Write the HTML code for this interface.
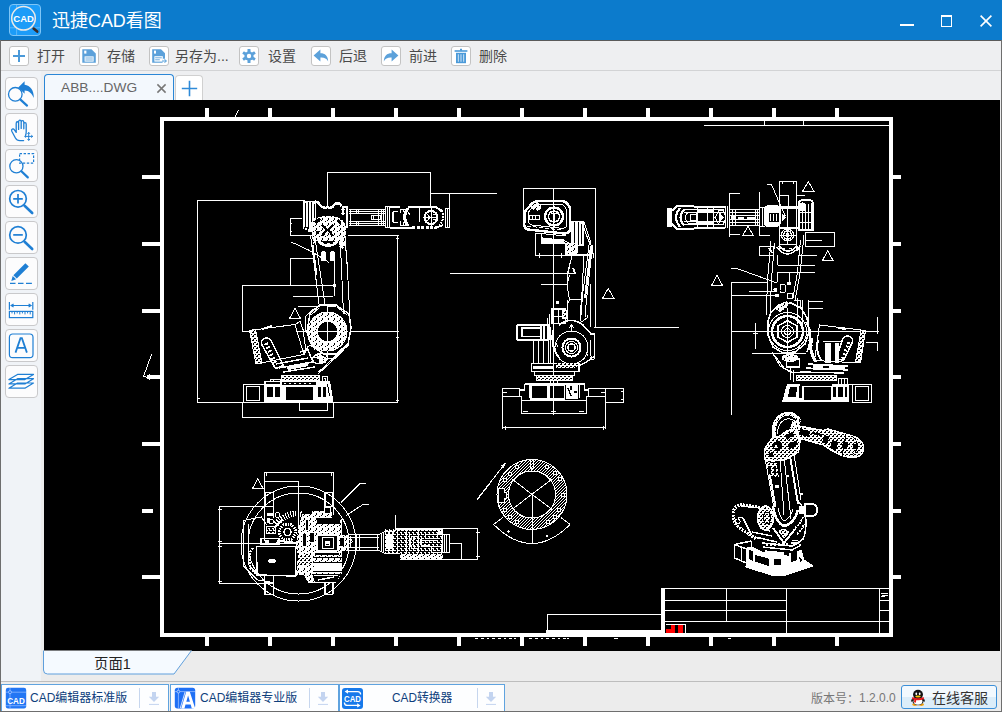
<!DOCTYPE html>
<html lang="zh"><head><meta charset="utf-8"><title>CAD Viewer</title>
<style>
html,body{margin:0;padding:0}
body{width:1002px;height:712px;position:relative;overflow:hidden;background:#ececec;font-family:"Liberation Sans",sans-serif;}
*{box-sizing:border-box}
.abs{position:absolute}
#win{position:absolute;left:0;top:0;width:1002px;height:712px;overflow:hidden;background:#ececec}
#titlebar{position:absolute;left:0;top:0;width:1002px;height:40px;background:#0c7bcc}
#tbline{position:absolute;left:0;top:40px;width:1002px;height:1px;background:#5a5a5a}
#toolbar{position:absolute;left:1px;top:41px;width:1000px;height:29px;background:#eeeff1}
#toolline{position:absolute;left:1px;top:70px;width:1000px;height:1px;background:#d2d3d5}
#tabrow{position:absolute;left:1px;top:71px;width:1000px;height:29px;background:#eeeff1}
#leftbar{position:absolute;left:1px;top:71px;width:40px;height:610px;background:#f0f3f7}
#canvas{position:absolute;left:44px;top:100px;width:956px;height:551px;background:#000;overflow:hidden}
#pagerow{position:absolute;left:44px;top:651px;width:956px;height:30px;background:#ececec}
#statline{position:absolute;left:1px;top:681px;width:1000px;height:1px;background:#bdbdbd}
#status{position:absolute;left:1px;top:682px;width:1000px;height:29px;background:#ececec}
.bl{position:absolute;background:#6e6e6e}
.tbi{position:absolute;top:46px;width:20px;height:20px;background:#fff;border:1px solid #c3c3c3;border-radius:3px}
.tbi svg{position:absolute;left:-1px;top:-1px;width:20px;height:20px}
.lb{position:absolute;left:5px;width:33px;height:33px;background:#fcfcfd;border:1px solid #c9c9cb;border-radius:4px}
.lb svg{position:absolute;left:-1px;top:-1px;width:33px;height:33px}
#tab1{position:absolute;left:44px;top:74px;width:130px;height:27px;background:#f3f8fd;border:1px solid #2a86d6;border-bottom:none;border-radius:4px 4px 0 0}
#tab1 span{position:absolute;left:16px;top:5px;font-size:13.7px;color:#666}
#tabplus{position:absolute;left:175px;top:75px;width:28px;height:26px;background:#fff;border:1px solid #d0d0d0;border-bottom:none;border-radius:4px 4px 0 0}
.sb{position:absolute;top:684px;height:28px;border:1px solid #5fa3df;background:#fdfeff}
.sbsep{position:absolute;top:688px;width:1px;height:20px;background:#c6d6ee}
#kefu{position:absolute;left:901px;top:685px;width:96px;height:24px;border:1px solid #3c8fd8;border-radius:3px;background:linear-gradient(#f3f9fe 0,#f3f9fe 50%,#dcedf9 50%,#dcedf9 100%)}
#ver{position:absolute;left:859px;top:691px;font-size:12px;color:#777;white-space:nowrap}
.tx{font-family:"Liberation Sans","Noto Sans CJK SC",sans-serif;font-size:1000px}
</style></head>
<body>
<div id="win">
<div id="titlebar">
  <svg class="abs" style="left:8px;top:3px;width:34px;height:34px" viewBox="0 0 34 34">
    <rect x="1.5" y="1.5" width="31" height="31" rx="3.5" fill="#1c9cf8" stroke="#7fc6f7" stroke-width="1"/>
    <path d="M8.6 2v30M2 24.8h30" stroke="#5db8f9" stroke-width="1" fill="none"/>
    <circle cx="15.5" cy="15.3" r="11.8" fill="#1c9cf8" stroke="#ebe9e6" stroke-width="1.5"/>
    <path d="M25.6 25.6l3.600 3" stroke="#3a2a26" stroke-width="2.600" stroke-linecap="round"/>
    <text x="15.6" y="18.9" font-family="Liberation Sans, sans-serif" font-weight="bold" font-size="9.4" fill="#fff" text-anchor="middle" textLength="20.5" lengthAdjust="spacingAndGlyphs">CAD</text>
  </svg>
  <svg style="width:109.78px;height:18.50px;position:absolute;left:51.5px;top:11.2px;" viewBox="0 -880 5934 1000"><text class="tx" x="0" y="0" fill="#fff" textLength="5934" lengthAdjust="spacingAndGlyphs">迅捷CAD看图</text></svg>
  <div class="abs" style="left:900px;top:24px;width:14px;height:2px;background:#fff"></div>
  <div class="abs" style="left:941px;top:15px;width:11px;height:12px;border:1px solid #fff;border-top-width:2px"></div>
  <svg class="abs" style="left:979px;top:14px;width:14px;height:14px" viewBox="0 0 14 14"><path d="M1.6 1.6l10.8 10.8M12.4 1.6L1.6 12.4" stroke="#fff" stroke-width="1.6" fill="none"/></svg>
</div>
<div id="tbline"></div>
<div id="toolbar"></div>
<div id="toolline"></div>
<div id="tabrow"></div>
<div id="leftbar"></div>

<!-- toolbar buttons -->
<div class="tbi" style="left:9px"><svg viewBox="0 0 20 20"><path d="M4 10h12M10 4v12" stroke="#4b9ad9" stroke-width="2" fill="none"/></svg></div>
<svg style="width:28.00px;height:14.00px;position:absolute;left:37.0px;top:49.0px;" viewBox="0 -880 2000 1000"><text class="tx" x="0" y="0" fill="#4a4a4a">打开</text></svg>
<div class="tbi" style="left:79px"><svg viewBox="0 0 20 20"><path d="M3.3 3.2h9.2l4.3 4.3v9.3H3.3z" fill="#5ca1da"/><rect x="5.2" y="4.6" width="2.2" height="3" fill="#fff"/><rect x="5.6" y="10.4" width="9" height="5.2" fill="#fff"/><path d="M6.4 12h7.4M6.4 14h7.4" stroke="#5ca1da" stroke-width="0.9"/></svg></div>
<svg style="width:28.00px;height:14.00px;position:absolute;left:107.0px;top:49.0px;" viewBox="0 -880 2000 1000"><text class="tx" x="0" y="0" fill="#4a4a4a">存储</text></svg>
<div class="tbi" style="left:149px"><svg viewBox="0 0 20 20"><path d="M3.2 3.2h8.8l4 4v5.6h-2.4v4H3.2z" fill="#5ca1da"/><rect x="5" y="4.6" width="2" height="3" fill="#fff"/><rect x="5.4" y="10.2" width="8.4" height="5.4" fill="#fff"/><path d="M6.2 11.8h6.6M6.2 13.8h4.6" stroke="#5ca1da" stroke-width="0.9"/><path d="M13.2 15h4M15.6 13.2l1.8 1.8-1.8 1.8" stroke="#4b9ad9" stroke-width="1" fill="none"/></svg></div>
<svg style="width:53.68px;height:14.00px;position:absolute;left:175.0px;top:49.0px;" viewBox="0 -880 3834 1000"><text class="tx" x="0" y="0" fill="#4a4a4a" textLength="3834" lengthAdjust="spacingAndGlyphs">另存为...</text></svg>
<div class="tbi" style="left:239px"><svg viewBox="0 0 20 20"><g transform="translate(10 10)" fill="#5ca1da"><circle r="4.6"/><g id="gt"><rect x="-1.5" y="-7" width="3" height="14" rx="0.6"/></g><use href="#gt" transform="rotate(60)"/><use href="#gt" transform="rotate(120)"/><circle r="2.2" fill="#fff"/></g></svg></div>
<svg style="width:28.00px;height:14.00px;position:absolute;left:268.0px;top:49.0px;" viewBox="0 -880 2000 1000"><text class="tx" x="0" y="0" fill="#4a4a4a">设置</text></svg>
<div class="tbi" style="left:311px"><svg viewBox="0 0 20 20"><path d="M2.6 9.6L9.4 3.6v3.6c4.6 0 7.6 2.6 7.8 8.2c-1.6-3-4-4-7.8-3.8v3.8z" fill="#5ca1da"/></svg></div>
<svg style="width:28.00px;height:14.00px;position:absolute;left:339.0px;top:49.0px;" viewBox="0 -880 2000 1000"><text class="tx" x="0" y="0" fill="#4a4a4a">后退</text></svg>
<div class="tbi" style="left:381px"><svg viewBox="0 0 20 20"><path d="M17.4 9.6L10.6 3.6v3.6c-4.6 0-7.6 2.6-7.8 8.2c1.6-3 4-4 7.8-3.8v3.8z" fill="#5ca1da"/></svg></div>
<svg style="width:28.00px;height:14.00px;position:absolute;left:409.0px;top:49.0px;" viewBox="0 -880 2000 1000"><text class="tx" x="0" y="0" fill="#4a4a4a">前进</text></svg>
<div class="tbi" style="left:451px"><svg viewBox="0 0 20 20"><path d="M3.6 5h12.8" stroke="#4b9ad9" stroke-width="1.6"/><path d="M10 2.8v2" stroke="#4b9ad9" stroke-width="2"/><rect x="5" y="6.8" width="10" height="10.4" fill="#4b9ad9"/><path d="M7.4 8.2v7.6M10 8.2v7.6M12.6 8.2v7.6" stroke="#b9d8f0" stroke-width="1.2"/></svg></div>
<svg style="width:28.00px;height:14.00px;position:absolute;left:479.0px;top:49.0px;" viewBox="0 -880 2000 1000"><text class="tx" x="0" y="0" fill="#4a4a4a">删除</text></svg>

<!-- tabs -->
<div id="tab1"><span>ABB....DWG</span>
  <svg class="abs" style="left:111px;top:8px;width:11px;height:11px" viewBox="0 0 11 11"><path d="M1.4 1.4l8.2 8.2M9.6 1.4L1.4 9.6" stroke="#777" stroke-width="1.5" fill="none"/></svg>
</div>
<div id="tabplus"><svg class="abs" style="left:5px;top:4px;width:17px;height:17px" viewBox="0 0 17 17"><path d="M0.8 8.5h15.4M8.5 0.8v15.4" stroke="#2f8ad8" stroke-width="1.6" fill="none"/></svg></div>

<!-- left toolbar -->
<div class="lb" style="top:77px"><svg viewBox="0 0 33 33"><circle cx="10.3" cy="17.3" r="6.8" fill="none" stroke="#1f7fd4" stroke-width="1.3"/><path d="M15.2 22.4l6.8 6.2" stroke="#1f7fd4" stroke-width="2.2" stroke-linecap="round"/><path d="M13.2 10.4l6.4-6.2v3.6c5.6.6 9.400 5.6 9.200 13.200c-1.800-4.600-4.600-7.400-9.200-7.600v3.400z" fill="#1f7fd4"/></svg></div>
<div class="lb" style="top:113px"><svg viewBox="0 0 33 33"><path d="M11.2 17.200V10.400c0-2.200 2.400-2.200 2.400 0v6M13.600 15.400V8.800c0-2.200 2.600-2.200 2.600 0v6.600M16.200 15.400V9.200c0-2.200 2.600-2.200 2.600 0v6.600M18.800 15.800v-4.600c0-2 2.400-2 2.400 0v7.800c0 1.200-.2 2.200-.6 3.200M11.200 17.200v2.200l-1.800-2.600c-1.200-1.800-3.600-.6-2.600 1.400l3.600 6.800c1 1.800 2.400 2.600 4.400 2.600h3.800" fill="none" stroke="#1f7fd4" stroke-width="1.300" stroke-linecap="round" stroke-linejoin="round"/><path d="M23.700 19.400v8M19.700 23.400h8M22.500 20.800l1.200-1.400 1.200 1.400M22.500 26l1.200 1.400 1.200-1.400M21.100 22.200l-1.400 1.200 1.400 1.200M26.300 22.200l1.400 1.200-1.400 1.200" fill="none" stroke="#1f7fd4" stroke-width="1"/></svg></div>
<div class="lb" style="top:149px"><svg viewBox="0 0 33 33"><circle cx="11.400" cy="17.300" r="6.600" fill="none" stroke="#1f7fd4" stroke-width="1.300"/><path d="M16.400 22.200l6.400 6.200" stroke="#1f7fd4" stroke-width="2.200" stroke-linecap="round"/><rect x="14.600" y="4.600" width="14" height="9.600" fill="none" stroke="#1f7fd4" stroke-width="1.200" stroke-dasharray="2.400 1.600"/></svg></div>
<div class="lb" style="top:185px"><svg viewBox="0 0 33 33"><circle cx="13" cy="13.800" r="8.300" fill="none" stroke="#1f7fd4" stroke-width="1.700"/><path d="M8.200 13.800h9.600M13 9v9.600" stroke="#1f7fd4" stroke-width="1.700"/><path d="M19.600 20.800l7.600 7.200" stroke="#1f7fd4" stroke-width="2.600" stroke-linecap="round"/></svg></div>
<div class="lb" style="top:221px"><svg viewBox="0 0 33 33"><circle cx="13" cy="13.900" r="8.300" fill="none" stroke="#1f7fd4" stroke-width="1.700"/><path d="M8.200 13.900h9.600" stroke="#1f7fd4" stroke-width="1.700"/><path d="M19.600 20.800l7.600 7.200" stroke="#1f7fd4" stroke-width="2.600" stroke-linecap="round"/></svg></div>
<div class="lb" style="top:257px"><svg viewBox="0 0 33 33"><path d="M20.400 6.200l3.400 3.400-12 12-3.400-3.400z" fill="#1f7fd4"/><path d="M7.700 18.900l3.400 3.400-4.800 1.600z" fill="#1f7fd4"/><path d="M5 26.300h5.500M13 26.300h5.500M21 26.300h5.900" stroke="#1f7fd4" stroke-width="1.200"/></svg></div>
<div class="lb" style="top:293px"><svg viewBox="0 0 33 33"><path d="M4.400 9v7.800M27.800 9v7.800M6.400 12.500h19.400M8.600 11l-2.400 1.500 2.400 1.500M23.600 11l2.400 1.500-2.400 1.500" fill="none" stroke="#1f7fd4" stroke-width="1.200"/><rect x="4.400" y="18.400" width="23.400" height="6.200" fill="none" stroke="#1f7fd4" stroke-width="1.200"/><path d="M7 18.400v2M9.600 18.400v3M12.200 18.400v2M14.800 18.400v3M17.400 18.400v2M20 18.400v3M22.600 18.400v2M25.200 18.400v3" stroke="#1f7fd4" stroke-width="1"/></svg></div>
<div class="lb" style="top:329px"><svg viewBox="0 0 33 33"><rect x="4.400" y="5" width="23.600" height="23.600" rx="3.200" fill="none" stroke="#1f7fd4" stroke-width="1.200"/><path d="M10.500 23.600l5-14.400h1.400l5 14.400M12.300 18.800h7.800" fill="none" stroke="#1f7fd4" stroke-width="1.800"/></svg></div>
<div class="lb" style="top:365px"><svg viewBox="0 0 33 33"><path d="M12.500 9.400h16l-8.600 5.200h-16zM12.500 13.700h16l-8.600 5.200h-16zM12.500 18h16l-8.600 5.200h-16z" fill="#fff" fill-opacity="0.600" stroke="#1f7fd4" stroke-width="1.200" stroke-linejoin="round"/></svg></div>

<!-- canvas -->
<div id="canvas">
<svg class="abs" style="left:0;top:0;width:956px;height:551px" viewBox="44 100 956 551" shape-rendering="crispEdges" fill="none" stroke="#fff" stroke-width="1">
<defs>
  <!-- dense linework approximations -->
  <pattern id="pd" width="6" height="5" patternUnits="userSpaceOnUse" stroke="none"><rect width="6" height="5" fill="#fff"/><rect x="1" y="1" width="1" height="1" fill="#000"/><rect x="4" y="3" width="1" height="2" fill="#000"/><rect x="3" y="0" width="1" height="1" fill="#000"/></pattern>
  <pattern id="pm" width="4" height="4" patternUnits="userSpaceOnUse" stroke="none"><rect width="4" height="4" fill="#fff"/><rect x="0" y="0" width="2" height="1" fill="#000"/><rect x="2" y="2" width="2" height="1" fill="#000"/><rect x="1" y="3" width="1" height="1" fill="#000"/></pattern>
  <pattern id="pl" width="4" height="4" patternUnits="userSpaceOnUse" stroke="none"><rect width="4" height="4" fill="#000"/><rect x="0" y="0" width="2" height="1" fill="#fff"/><rect x="2" y="2" width="2" height="1" fill="#fff"/><rect x="1" y="1" width="1" height="2" fill="#fff"/></pattern>
  <pattern id="hatch" width="3" height="3" patternUnits="userSpaceOnUse" stroke="none"><rect width="3" height="3" fill="#000"/><path d="M-1 1L1 -1M0 3L3 0M2 4L4 2" stroke="#fff" stroke-width="1"/></pattern>
</defs>
<!-- sheet frame -->
<g id="frame" stroke="none" fill="#fff">
  <path d="M160 117h733v520h-733zM164 121v512h725v-512z" fill-rule="evenodd"/>
  <!-- top ticks -->
  <path d="M205 108h4v9h-4zM268 108h4v9h-4zM331 108h4v9h-4zM394 108h4v9h-4zM457 108h4v9h-4zM520 108h4v9h-4zM583 108h4v9h-4zM646 108h4v9h-4zM709 108h4v9h-4zM772 108h4v9h-4zM835 108h4v9h-4z"/>
  <!-- bottom ticks -->
  <path d="M205 637h4v9h-4zM268 637h4v9h-4zM331 637h4v9h-4zM394 637h4v9h-4zM457 637h4v9h-4zM520 637h4v9h-4zM583 637h4v9h-4zM646 637h4v9h-4zM709 637h4v9h-4zM772 637h4v9h-4zM835 637h4v9h-4z"/>
  <!-- left ticks -->
  <path d="M142 175h18v4h-18zM142 242h18v4h-18zM142 309h18v4h-18zM148 375h12v4h-12zM142 442h18v4h-18zM142 509h11v4h-11zM142 575h18v4h-18z"/>
  <circle cx="149.5" cy="377" r="2.6"/>
  <!-- right ticks -->
  <path d="M893 175h8v4h-8zM893 242h8v4h-8zM893 309h8v4h-8zM893 375h8v4h-8zM893 442h8v4h-8zM893 509h8v4h-8zM893 575h8v4h-8z"/>
  <!-- title block heavy lines -->
  <path d="M661 588h4v46h-4zM546 630h116v3h-116z"/>
</g>
<g id="frame-thin">
  <path d="M238.5 110l-3.5 7M151.5 354.5l-8 22l5 1"/>
  <path d="M704 125.500h185M764.500 121v4.500M803.500 121v4.500"/>
  <!-- title block -->
  <path d="M664 588.500h225M664 600.500h122M664 610.500h122M664 621.500h225M726.500 589v32M786.500 589v44M879.500 589v44M879.500 610.500h10M879.500 600.500h10"/>
  <path d="M547.500 630v-15.500h114"/>
  <path d="M666 624.500h19.500v8" />
  <path d="M881 593h7M882 595h6M881 597l7-2" />
  <!-- dotted note text under frame -->
  <path d="M475 638.500h3M481 638.500h3M487 638.500h2M492 638.500h3M498 638.500h3M504 638.500h2M509 638.500h3M514 638.500h2M529 638.500h3M535 638.500h3M541 638.500h2M546 638.500h3M552 638.500h3M558 638.500h2M563 638.500h3M567 638.500h2M614 638.500h4M728 638.500h3" />
</g>
<g stroke="none">
  <path d="M665.500 628.500h5v-4h4.500v8h-9.500zM678 624.500h4.500v8h-4.500z" fill="#f00"/>
</g>
<!-- ===== VIEW 1 : side elevation (left) ===== -->
<g id="v1">
  <!-- dimension lines -->
  <path d="M327.500 207v-34.500h103v33M430.500 193.500h66.500M449.500 193.500v33"/>
  <path d="M305 200.500h-107.500v202h200v-167.500h-50M312 235.500h-14"/>
  <path d="M302 218.500h-11.500v16.500h12M290 223.500h2M290 231.500h2M396 238.500h3"/>
  <path d="M313 258.500h-22.500v27M335 285.500h-92.500v46h8M350 331.500h47.500"/>
  <path d="M292.500 296.500h40M298 306.500h20M328 306.500h8M334.500 255v41M327.500 306v52"/>
  <path d="M289.500 318.500h11l-5.500-10z"/>
  <path d="M291 242.500l5 1.500q18 8 33 18.500"/>
  <path d="M242.500 402.500v15h91v-15M299.500 402.500v8h28v-8"/>
  <circle cx="334.500" cy="285.500" r="1.500" fill="#fff"/><path d="M396 235.500h3M396 331.500h3M396 337.500h3M396 400.500h3M198 398.500h2" />
  <!-- upper arm : motor end -->
  <path d="M303 203q0-2.500 3-2.500h8l2 2v29h-8q-5 0-5-4z" fill="#fff" stroke="none"/>
  <path d="M305.500 203v24M308.500 202v27M311.500 202v20M314.500 204v14M304 227h3v3h-3z" stroke="#000"/>
  <!-- upper arm : casting top band -->
  <path d="M315 201.500l3 1l4 4.500q5 2 5.500-1q.5 3 5 1l3-3.500h4l2 2.500" stroke-width="2.400"/>
  <path d="M341.500 206.500h5M342.500 207v8M346.500 206v22" stroke-width="2"/>
  <path d="M341 209.500h4M341 213.500h4"/>
  <!-- elbow blob -->
  <path d="M312 236v-12q2-8 16-8t17 8l1 4v8l-2 3q2 6-1 10l-4-2v-6h-24l-1 5z" fill="url(#pd)" stroke="none"/>
  <path d="M323 224l4.500 5.500L332 224l2 1-4.500 5 4.500 5.500-2 1-4.500-5.500-4.500 5.500-2-1 4.500-5.500-4.500-5z" fill="#000" stroke="none"/>
  <path d="M314 221l5-3 2 2-5 4zM316 231h3v3h-3zM338 219l3 3-2 2-3-3z" fill="#000" stroke="none"/>
  <path d="M318 239q10 9 20 0v4q-10 8-20 0z" fill="#fff" stroke="none"/>
  <path d="M324 243.500h3M330 243.500h3" stroke="#000"/>
  <!-- arm tube -->
  <path d="M349 209.500h36M349 211.500h36M349 213.500h36M349 221.500h36M349 223.500h36M349 225.500h36" />
  <path d="M350.500 209v17M356.500 209v5M356.500 221v5M358.500 209v5M358.500 221v5M381.500 209v17M383.500 209v17M378.500 209v17"/>
  <path d="M351 214h5v7h-5zM361 215h10v5h-10z" fill="#000" stroke="none"/>
  <path d="M371 215.500h9v4h-9z"/><path d="M373 215v5" />
  <!-- flange -->
  <path d="M385 206.500h5M385 227.500h5M385.500 206v22M387.500 206v22M389.500 206v22"/>
  <!-- wrist housing -->
  <path d="M390 207h10M408 207h27l8 4M390 228h22M434 228.500l9-3.500" stroke-width="2"/>
  <path d="M412 227h25" stroke-width="3" stroke-dasharray="3 1.500"/>
  <path d="M398 211.500h-3q-2 0-2 2v7q0 2 2 2h3" stroke-width="1.500"/>
  <path d="M400 209.500h6M400 225.500h6M400.500 209v4M400.500 221v5M403.500 209v3M403.500 222v4"/>
  <path d="M408 208q-7 9 0 18" stroke-width="3"/>
  <path d="M406 209l4 6M404 213l3 1M404 221l3-1" />
  <path d="M419.500 208v14"/>
  <circle cx="431" cy="217.500" r="7"/><circle cx="431" cy="217.500" r="6"/>
  <path d="M424 217.500h14M431 206v22M427 214l3 3.500-3 3.500M433 214.500h3v5h-3"/>
  <path d="M436 207q8 4 7 10.500t-7 10.500" stroke-width="2" stroke-dasharray="2 1"/>
  <path d="M444.500 208h5M444.500 227h5M445.500 208v19M447.500 208v19"/>
  <!-- lower arm -->
  <path d="M310.500 235l9 72.500M314.500 235l10.500 69M340 235l3.500 79M345 237l2.500 33.500l2.500 49"/>
  <path d="M312.500 245l4 30" stroke-width="2"/>
  <path d="M321.500 260v-6q0-3 2-3t2 3v6zM330.500 260v-6q0-3 2-3t2 3v6z" fill="#fff"/>
  <path d="M346 250l1 10M347.500 262v4"/>
  <!-- shoulder ring -->
  <path d="M310 313l10-8h16l13 9l2 14-3 16-12 10h-12l-12-8-5-14z" stroke-width="1.500"/>
  <path d="M311 315l8-7M337 307l10 8M349 345l-11 9M308 338l7 12" />
  <circle cx="327.500" cy="331.500" r="15" stroke="url(#pd)" stroke-width="8"/>
  <circle cx="327.500" cy="331.500" r="10.500" stroke-width="1.500"/>
  <circle cx="327.500" cy="331.500" r="19.500"/>
  <path d="M313 309l-8 8v14M306 331.500h-10M317 331.500h22M327.500 320v24"/>
  <!-- housing / balancer -->
  <path d="M249.500 330.500l45.500-6l9 30-48 9.500z"/>
  <path d="M249.500 330.500l6.500 33.500 6-1-6.500-33.500z" fill="url(#pm)" stroke-width="1"/>
  <path d="M262 328l10-3v2l-10 3z" fill="#fff" stroke="none"/>
  <path d="M295 324.500l5-3 3 8 3 22M304 354.500l4-8 4-2"/>
  <path d="M262 345q-2-5 2.500-6.500t7 3l12 24l-8 3z" stroke-width="1.500"/>
  <path d="M266 343l10 22" stroke-width="4" stroke-dasharray="2 2"/>
  <path d="M276 364l32-6M279 368l34-6M283 372l32-5M300 352l8-2 4 10" stroke-width="1.500"/>
  <path d="M286 366l22-4v4l-20 4z" fill="#fff" stroke="none"/>
  <ellipse cx="320" cy="358.500" rx="7.500" ry="5" transform="rotate(-12 320 358.500)" stroke-width="1.500"/>
  <path d="M314 357l12 3M320 354v9M317 355l6 7M321 356l4 2v4l-4-1z" stroke-width="1.500"/>
  <path d="M348.500 344l-30 28M344 350l-26 24"/>
  <path d="M326 358.500h6"/>
  <!-- turntable -->
  <path d="M281 375.500h38v5h-38z" fill="url(#pm)"/>
  <path d="M270 379.500h10v5h-10zM273 379.500v5M322 376.500h5v7h-5zM324 378.500h1v3h-1"/>
  <!-- base -->
  <path d="M243 384.500h21v17.500h-21zM246.500 386.500h13v13.500h-13z"/>
  <path d="M264 381h66l3.500 21h-69.500z" fill="#fff" stroke="none"/>
  <path d="M266 382h14v2h-14zM267 387h6v10h-6zM275 387h5v10h-5zM282 382h34v3h-34zM286 386.500h26.500v13h-26.500zM317.500 387h3.500v10h-3.500zM323 387h3v10h-3zM328 384l2 12h-1l-2-12z" fill="#000" stroke="none"/>
  <path d="M284 383.500h30" stroke-dasharray="2 3"/>
</g>
<!-- ===== VIEW 2 : front elevation (middle) ===== -->
<g id="v2">
  <!-- dimension lines -->
  <path d="M523.500 227v-38.500h71.500v139.500M553.500 188.500v226M449.500 273.500h126M541 284.500h26M594 327.500h85"/>
  <path d="M535.500 233v22.500h53M539.500 253v5M561.500 253v5M537 255.500h6M559 255.500h6"/>
  <path d="M602.500 298.500h11.500l-5.800-10z"/>
  <path d="M590.500 284v43M596 327.500h4" /><circle cx="557.500" cy="302.500" r="1" fill="#fff"/>
  <path d="M502.500 388v40.500M605.500 388v40.500M502.500 427.500h103M505 425.500v4M603 425.500v4M605.500 388.500h17.500v13.500h-17.500M621 391.500h3M621 399.500h3"/>
  <!-- wrist housing (front) -->
  <path d="M524.500 222v-10l7-8q3-3 9-3h21q4 0 6 3l2.500 3.500v23q-2 3-6 3l-36-4q-4-1-4-7z" stroke-width="2.500"/>
  <path d="M528 221v-8.500l6-6.500q2-2 7-2h19q3 0 4.500 2.500l2 3v17l-3 2-32-3.500q-3-1-3-4z"/>
  <path d="M530 207l7-4 4 1-8 6zM536 208l5-3v4l-4 2z" fill="#fff" stroke="none"/>
  <circle cx="554" cy="216.500" r="9" stroke-width="2.500"/>
  <circle cx="554" cy="216.500" r="5.500" stroke-width="1.500"/>
  <path d="M550.500 213.500h7M554 213.500v7"/>
  <path d="M529.500 215.500h9.500v4h-9.500zM532.500 215.500v4M535.500 215.500v4"/>
  <path d="M527 226l34 4" stroke-dasharray="4 2"/>
  <!-- under housing -->
  <path d="M541 234.500l2 6M535.500 233l30 3"/>
  <path d="M542 239l20 .5 3 4-23-.5z" fill="#fff" stroke-width="1.500"/>
  <path d="M562 239l8 5"/>
  <!-- arm upper block -->
  <path d="M571 221h13v25h-13z" fill="#fff" stroke="none"/>
  <path d="M574.500 222v23M578.500 222v23M581.500 224v20" stroke="#000"/>
  <path d="M584 222l6 18 4 18M584 228l5 14"/>
  <path d="M565 243.500h12v9.500l-5 1h-7z" fill="url(#pd)" stroke-width="1"/>
  <path d="M572 254h17"/>
  <!-- lower arm -->
  <path d="M572.500 254l-5.500 21v10l2.500 14.500M569.500 275l-2.500 10M570.500 262l-2.500 12" />
  <path d="M569.500 299.500h11M569.500 299.500l-2.500 6v16M567.500 300v22" />
  <path d="M584 254l-3.500 67M589.500 241.500l-7 54-2 26M592.500 245l-6 55-1.500 17" />
  <path d="M591 246l-6 52" stroke-width="2"/>
  <path d="M580 305v14q0 3 3 2l4-3v-3"/>
  <path d="M573 268l2 5" stroke-width="2"/>
  <!-- blocks left of arm bottom -->
  <path d="M552 309h13.500v14.500h-13.500zM552 316.500h13.500M558.500 309v14.500" stroke-width="1.500"/>
  <path d="M562 310h4v8h-4z" fill="url(#pm)"/>
  <path d="M549.500 314v26M547.500 318v6"/>
  <!-- motor -->
  <path d="M519 324.500h29v15.500h-29q-2 0-2-2v-11.500q0-2 2-2z" stroke-width="2"/>
  <path d="M522 328h18.500v8.500h-18.500z" stroke-width="1.500"/>
  <path d="M541 325v15M544 325v15" stroke-width="1.500"/>
  <!-- column -->
  <path d="M533.500 340.500v23M538.500 340.500v23M543.500 340.500v23M548.500 340.500v23M550.500 327v36" />
  <!-- gear housing -->
  <circle cx="571.500" cy="347.500" r="16.500"/>
  <circle cx="571.500" cy="347.500" r="9" stroke-width="2"/>
  <circle cx="571.500" cy="347.500" r="6"/>
  <circle cx="571.500" cy="347.500" r="3.500" stroke-width="1.500"/>
  <path d="M559 325q12-9 24 0l8 9h3.500v22l-8 6q-8 5-16 4" stroke-width="1.500"/>
  <path d="M571.500 325v6M569 328l2.500-3 2.500 3M556 343l2 4M586 352l2 4M582 360l3-2M590 340v16M592.500 356a2 2 0 1 0 .1 0" />
  <path d="M553 330q-3 16 6 28" stroke-width="2"/>
  <!-- lower body -->
  <path d="M531.500 363.500h47.500v8h-47.500z" stroke-width="1.500"/>
  <path d="M533 366h20v3h-20z" fill="#fff" stroke="none"/>
  <path d="M556 362.500h22l-3 5h-19z" fill="url(#pm)" stroke="none"/>
  <path d="M534 372v3.500h40v-3.500" />
  <path d="M536 375.500h36v4.500h-36z" fill="url(#pm)"/>
  <path d="M550 380v4M557 380v4"/>
  <!-- base -->
  <path d="M524.500 384h60M524.500 384v6h-5v6M584.500 384v6h4v6M529.500 384v14M579.500 384v14" stroke-width="1.500"/>
  <path d="M531 385h17v14h-17zM549.500 385h15v14h-15z" stroke-width="1.500"/>
  <path d="M565.500 385h12.500v14h-12.500z" fill="#fff" stroke="none"/>
  <path d="M568 388l3 8M574 392h3M571 386v4" stroke="#000" stroke-width="1.500"/>
  <!-- mounting plate -->
  <path d="M502.500 388.500h17M588 388.500h17.500M502.500 396.500h19M586 396.500h19.500M502.500 392.500h4M601 392.500h4" />
  <path d="M521.500 396.500v17h64.500v-17M521.500 400.500h64.500" />
  <path d="M523 411.500h5M579 411.500h5M551 411.500h5"/>
</g>
<!-- ===== VIEW 3 : side elevation mirrored with working dims (right) ===== -->
<g id="v3">
  <!-- triangles -->
  <path d="M802.500 191.500h11.500l-5.700-10zM742.500 235.500h11l-5.500-9zM822.500 260.500h10.500l-5.300-10zM711.500 285.500h11l-5.500-10z"/>
  <!-- dimension lines -->
  <path d="M729.500 192.500v44M729.500 193.500h10M729.500 234.500h10M759.500 192v43.500h10"/>
  <path d="M767 184.500h4.500l9 21l5 11"/>
  <path d="M779.500 207v-25.500h17v26M779.500 195.500h9v12M796.500 195.500h8M782 181.500v2M793 181.500v2"/>
  <path d="M805.500 232.500h28.500v13.500h-28.500zM805.500 240.500h16"/>
  <path d="M759.500 246.500h14v9h-14z"/>
  <path d="M798 255.500h19M777.500 255v10M798.500 255v10M777.500 265.500h37.500M777.500 272.500h37.500"/>
  <path d="M731 268.500h6l40 14.500"/>
  <path d="M768 282.500h-36.500v132M748.500 291.500h28M731.500 295.500h45M731.500 331.500h147.500"/>
  <path d="M755.500 323v26M753 333.500h5M751.500 353.500h54"/>
  <path d="M808.500 299.500v24.500M808.500 301.500h14.500M808.500 308.500h14.500"/>
  <path d="M877.500 317v16.500M877.500 342v9M865.500 342.500h12"/>
  <circle cx="775.500" cy="289.500" r="1.500" fill="#fff"/><circle cx="789" cy="283.500" r="1.500" fill="#fff"/><circle cx="777" cy="295.500" r="1.500" fill="#fff"/>
  <!-- upper arm (pointing left) -->
  <path d="M667 208h5v19h-5z" fill="#fff" stroke="none"/>
  <path d="M672 211l5-5h16l2 1h30M672 224l5 5h16l2-1h30" stroke-width="1.500"/>
  <path d="M680 208q-8 9.500 0 19M684 209.500q-7 8 0 16" stroke-width="2"/>
  <path d="M688 212q-5 5.500 0 11h8v-11zM690 214.500h6v6h-6z"/>
  <path d="M684 209.500h40M684 212.500h40M684 221.500h40M684 224.500h40M697.500 207v21M707.500 207v21M713.500 207v21" />
  <path d="M698 209h9v3h-9zM698 222h9v3h-9zM708 209h5v3h-5zM708 222h5v3h-5z" fill="#fff" stroke="none"/>
  <path d="M715 217.500l4-7h4l2 4v6l-2 4h-4z" />
  <path d="M719 212l4 5.500-4 5.500z" fill="#fff"/>
  <path d="M725.500 206v22M727.500 206v22" stroke-width="1.500"/>
  <path d="M729 209.500h31M729 212.500h31M729 215.500h31M729 219.500h31M729 222.500h31M729 225.500h31M732.500 209v17M735.500 209v17M755.500 209v17M757.500 209v17"/>
  <path d="M731 216h4v3h-4zM738 216.500h6v2.500h-6zM747 216.500h8v2.500h-8z" fill="#fff" stroke="none"/>
  <!-- elbow -->
  <path d="M764 210q0-5 6-5h8l3 4v14l-4 4h-8q-5 0-5-5z" fill="#fff" stroke="none"/>
  <path d="M768.500 213h11.500v9h-11.500z" fill="#000" stroke="none"/>
  <path d="M770.500 214v7M773.500 214v7M776.500 214v7" stroke-width="1.500"/>
  <path d="M782 214.500l3.500 3-3.500 3z" fill="#fff"/>
  <path d="M760 207.500h5M760 226.500h5M762.500 207v20"/>
  <path d="M779 207.500h20" stroke-width="3"/>
  <path d="M779.500 207v44M787.500 207v22M796.500 207v44" />
  <path d="M779 228h19" stroke-width="2"/>
  <circle cx="787.500" cy="235" r="6"/><circle cx="787.500" cy="235" r="4" stroke-width="1.500"/><circle cx="787.500" cy="235" r="1.500" fill="#fff"/>
  <path d="M779 235.500h18M787.500 228v16"/>
  <!-- elbow motor -->
  <path d="M799 204q0-4 4-4h6q4 0 4 4v26h-14z" stroke-width="2"/>
  <path d="M802 202v27M805.500 204v26M808.500 204v26M811 203v26" />
  <path d="M800 203h5v8h-5z" fill="#fff" stroke="none"/>
  <path d="M799 212.500h14M799 222.500h14"/>
  <!-- lower arm -->
  <path d="M771 241l-3 33-2 41M774.500 243l-2.500 30-2 38M804 235.500l-4 38-5 27M800.500 240l-3 32-4.500 26"/>
  <path d="M777 247q10 14 22 0M779 246q9 10 18 0" stroke-width="1.500"/>
  <path d="M780 244.500h16M782 248.500h3M789 248.500h3" />
  <path d="M769 248l3 5M800 246l-3 5" stroke-width="2"/>
  <path d="M789.500 272v12M777.500 272v10"/>
  <path d="M780.500 284.500h3q2 0 2 2v4q0 2-2 2h-1.500q-2 0-2-2z"/>
  <path d="M787 293h5v5h-5z"/>
  <path d="M794 300h6v8M797.500 298v26M802.500 300v24"/>
  <!-- shoulder -->
  <path d="M771 312l8-7 12-2 10 5 6 10 2 14-4 12-10 8-12 1-10-6-5-12 0-14z" stroke-width="1.500"/>
  <path d="M774 308l10-6 5 4-9 6zM781 303l6-2 2 3-6 2z" fill="url(#pd)" stroke="none"/>
  <circle cx="787.500" cy="331.500" r="15.500" stroke-width="2.500"/>
  <circle cx="787.500" cy="331.500" r="19" />
  <path d="M787.500 320.500l9.500 5.500v11l-9.500 5.500-9.500-5.500v-11z" stroke-width="1.500"/>
  <circle cx="787.500" cy="331.500" r="6"/><circle cx="787.500" cy="331.500" r="3"/>
  <path d="M787.500 308v44"/>
  <path d="M806 322l4 8v12l-3 10M809 340l3 6" stroke-width="1.500"/>
  <!-- below shoulder -->
  <ellipse cx="790" cy="358" rx="8" ry="3.500" fill="url(#pd)"/>
  <path d="M786.500 359h13v8h-13z" stroke-width="1.500"/>
  <path d="M772 352l8 14 10 6h14"/>
  <path d="M775 356l9 12 8 4" />
  <!-- balancer housing -->
  <path d="M819.500 325l46 5.500-5 32.500-46-2.500z"/>
  <path d="M865.500 330.500l-5.500 32.500-4.500-.5 5.500-32.500z" fill="url(#pm)"/>
  <path d="M838 327l8 1v2l-8-1z" fill="#fff" stroke="none"/>
  <path d="M812 338q-4 12 4 24" stroke-width="3"/>
  <path d="M818 340q-3 10 3 20" stroke-width="2"/>
  <path d="M825 343h6v20h-6zM835 343h4v20h-4z" fill="#fff" stroke="none"/>
  <path d="M823 341.500h18"/>
  <path d="M852 343q2-5-2.500-6.500t-7 3l-6 19l7 2z" stroke-width="1.500"/>
  <path d="M849 342l-7 18" stroke-width="3" stroke-dasharray="2 2"/>
  <path d="M808 364l40 2M806 368l42 2M800 372l44 1" stroke-width="1.500"/>
  <path d="M813 365h10v5h-10zM829 366h16v4h-16z" fill="#fff" stroke="none"/>
  <!-- turntable -->
  <path d="M796 375.500h40v4.500h-40z" fill="url(#pm)"/>
  <path d="M790 368v12M793.500 370v12M838 378.500h9v6h-9zM841 378.500v6M844 378.500v6"/>
  <!-- base -->
  <path d="M787 384h62v18h-67z" fill="#fff" stroke="none"/>
  <path d="M790 387h7l-1 10h-8zM799 386h3v12h-3zM803.500 386.500h27.500v13h-27.500zM833 387h3v10h-3zM838 387h5v10h-5zM845 387h2v10h-2zM800 384h32v1.500h-32z" fill="#000" stroke="none"/>
  <path d="M852.500 384.500h19v17.500h-19zM855.500 386.500h13v13.500h-13zM849 384.500h23"/>
</g>
<!-- ===== VIEW 4 : isometric (lower right) ===== -->
<g id="v4">
  <path d="M731.500 402v12.500"/>
  <!-- elbow loop (thin rim with dark hole) -->
  <path d="M774.500 436q-2-12 4-18t14-3.500l7 5" stroke="url(#pd)" stroke-width="4"/>
  <path d="M773 437q-2-13 5-19.500t16-3.500l7 6M778 434q-1-8 4-12.500t11-1.500"/>
  <path d="M793 420l8 1-3 6-8 2z" fill="url(#pd)" stroke="none"/>
  <!-- elbow body -->
  <path d="M773 437l-8.500 12v10l8 2 12-1 14-8 2-14-6-9-8 2-8 6z" fill="url(#pm)" stroke-width="1.500"/>
  <path d="M772 446l5-6 4 2 1 6-5 4zM785 436l7-4 2 3-7 5zM788 444l9-4v5l-8 5zM768 454l4-2 2 4-4 1z" fill="#000" stroke="none"/>
  <path d="M776 444.500l2 3h-4z" fill="#fff" stroke="none"/>
  <!-- upper arm -->
  <path d="M796 425.500l27 5 5-1.500 26 7.500q9 3.500 9.500 11t-7 9.500q-8 1-16-2l-8-4-9-6-25-7z" fill="url(#pm)" stroke-width="1.500"/>
  <path d="M800 429l10 2-1 6-10-2.500zM812 432l10 2-1 2-10-2zM824 435l5 1.500-2 8-5-2zM832 440l6 2-2 9-6-3zM843 441l5 2-1 6-5-1zM855.500 444a2.500 2.500 0 1 0 .1 0z" fill="#000" stroke="none"/>
  <path d="M846 434l-4 22M851 436q6 2 6 10t-6 8.500" stroke="#000"/>
  <circle cx="857" cy="447" r="6.500"/>
  <!-- lower arm -->
  <path d="M765 458l9 50M780 458l4 57M784 457l7 62M794 454l7 46"/>
  <path d="M767 459l8.500 48M790 456l8 48" stroke-width="2"/>
  <path d="M767 462l10 1 2 14-9-1z" fill="url(#pm)" stroke="none"/>
  <path d="M768 466h3v8h-3zM774 467h2v8h-2z" fill="#000" stroke="none"/>
  <circle cx="777" cy="486.500" r="1.500" fill="#fff"/><circle cx="788" cy="476" r="1" fill="#fff"/><circle cx="801.500" cy="494" r="1" fill="#fff"/>
  <!-- shoulder -->
  <path d="M773 506q2 16 11 20q10-2 14-16" stroke-width="2.500"/>
  <path d="M778 508q2 10 6 13q6-2 9-12"/>
  <path d="M798 501q8 8 8 20t-3 18q-5 5-12 4" stroke-width="1.500"/>
  <path d="M795 528q6-4 8-12M797 534q5-4 7-10" stroke-dasharray="2 1" stroke-width="2"/>
  <ellipse cx="765.500" cy="518" rx="8" ry="12" fill="url(#pm)" stroke-width="1.500"/>
  <ellipse cx="767" cy="518" rx="3.500" ry="6" stroke="#000"/>
  <path d="M773 528l11 15 11-14" stroke-width="2"/>
  <path d="M779 531l5 7 5-6-5-3z" fill="url(#pm)"/>
  <!-- balancer loop -->
  <path d="M760 507.500l-19-3q-8 2-8 10t6 13l18 12" stroke-width="3" stroke-dasharray="2 1"/>
  <path d="M741 506l19 2M738 518q4-2 6 2l7 14" stroke-width="1.500"/>
  <path d="M737.500 519a2.500 2.500 0 1 0 .1 0"/>
  <path d="M752 532l20 4M755 537l22 5M760 528l10 3" stroke-width="1.500"/>
  <!-- motor right -->
  <path d="M805 504h8q4 1 4 6t-4 6h-8z" stroke-width="2"/>
  <path d="M799 506h6v8h-6z" fill="#fff" stroke="none"/>
  <!-- turntable -->
  <path d="M762 543l30 3 8-4M763 547l29 3 9-5M765 551l28 3" stroke-width="1.500"/>
  <path d="M766 544h24" stroke-dasharray="2 2" stroke-width="3"/>
  <!-- base -->
  <path d="M734.500 544.500l17-3.500M734.500 544.500v13.500l12 5M741.500 547v13M734.500 544.500l12 4.500 5-1" stroke-width="1.500"/>
  <path d="M747 548l5-1 10 5 30 3 9-5 3 10 9 6-27 9h-15l-25-8z" fill="#fff" stroke-width="1"/>
  <path d="M749 550l3.500 1v9.500l-3.500-1.500zM755 555l13.500 3.500v7.500l-13.500-4.500zM773.500 558.500h7v6h-7zM791 553l6-2v9l-6 2zM784 552l5 1v3l-5-1zM799 556l3 4-2 2z" fill="#000" stroke="none"/>
  <path d="M752 541l-1 7 4 5M800 547l-2-6-6-1" />
</g>
<!-- ===== VIEW 5 : top view (lower left) ===== -->
<g id="v5">
  <!-- dimension lines -->
  <path d="M264.500 541v-68.500h68.500v42M264.500 576v18M333 572v22M264.500 481.500h34v48M266 472.500v3M331 472.500v3"/>
  <path d="M252.500 488.500h10.500l-5.200-10z"/>
  <path d="M273.500 506.500h-54.500v77h54M219.500 543.500h81M217.500 509h4M217.500 541h4M217.500 546h4M217.500 581h4"/>
  <path d="M341 502.500l19-19h6M346 515.500l17-11h6M477 500l12.500-16"/>
  <path d="M395.500 515v13.500h82v31h-34.500M448.500 543.500h13v16M475.500 532.500h4M475.500 556.500h4"/>
  <!-- circles -->
  <circle cx="298.500" cy="543.500" r="57.500"/>
  <circle cx="298.500" cy="543.500" r="50.500"/>
  <!-- feet -->
  <path d="M265 492.500h8.500v14h-8.500zM325 492.500h7.500v14h-7.500zM265 582.500h8.500v12h-8.500zM325 582.500h7.500v12h-7.500z" stroke-width="1.500"/>
  <path d="M273.500 506v12M325.500 506v8M273.500 575v8M325.500 572v11"/>
  <!-- left outline polygon -->
  <path d="M243.500 566v-45.500l18-3.500 5 8M243.500 566l14 14 12 2M248 524v40l11 12" />
  <path d="M253 548l-3 4v16l8 8" stroke-dasharray="2 1" stroke-width="2"/>
  <!-- small blocks top-left -->
  <path d="M267 513h7v3h-7zM267 518h3v5h-3z" fill="#fff" stroke="none"/>
  <circle cx="277.500" cy="515" r="2.500"/><circle cx="271" cy="521.500" r="2.500"/>
  <path d="M266 526h9v7h-9z" fill="url(#pl)"/>
  <!-- gear -->
  <circle cx="287.500" cy="532" r="8" stroke-width="3" stroke-dasharray="1.500 1"/>
  <circle cx="287.500" cy="532" r="3.500" stroke-width="1.500"/>
  <path d="M276 524q10-12 26-10" stroke-width="6" stroke-dasharray="1 1.500"/>
  <path d="M274 528l8-8M279 540l-3 4" stroke-width="2"/>
  <!-- link bar -->
  <path d="M261 538.500h18v6h-18z" stroke-width="1.500"/><path d="M265 540.500h3v2h-3z" fill="#fff"/>
  <path d="M279 541l18 2" stroke-width="2"/>
  <!-- big motor block -->
  <path d="M256.500 546.500h39v29.500l-38.500-1z" stroke-width="1.500"/>
  <ellipse cx="272" cy="561" rx="4" ry="2" fill="#fff" stroke="none"/>
  <path d="M296 548l4 2v22l-4 3" stroke-width="1.500"/>
  <!-- right cluster (dense) -->
  <path d="M302 514h10v-3h20v8h10v16h6v16h-6v22l-6 10h-28l-4-8h-8l2-20-2-10 2-14z" fill="url(#pd)" stroke="none"/>
  <path d="M317 518h22.500v6h-22.500z" fill="#000" stroke="none"/>
  <path d="M324.500 507h6v6.500h-6z" fill="#000" stroke-width="1.500"/>
  <path d="M320 535q-3 0-3 3v10q0 3 3 3h15q3 0 3-3v-10q0-3-3-3z" fill="#000" stroke-width="1.500"/>
  <path d="M322 537.500h11v11h-11zM325.500 541h4v4h-4z" /><path d="M326 542h3v2h-3z" fill="#fff" stroke="none"/>
  <path d="M310 533h3.500v9h-3.500zM303 534h3v12h-3zM306 520h2v10h-2zM340 538h4v8h-4zM315 553h24v2h-24z" fill="#000" stroke="none"/>
  <path d="M313 557h29M313 562.500h29M313 571.500h29" stroke="#000"/>
  <path d="M314 563h28v8h-28z" fill="#fff" stroke="none"/>
  <path d="M312 574h28l-3 8h-22z" fill="#000" stroke="none"/>
  <path d="M314 575.500h24M318 580l16-3" stroke-width="1.500"/>
  <path d="M298 556l12-3 2 10-12 4z" fill="url(#pm)" stroke="none"/>
  <!-- arm -->
  <path d="M348 534.500h31M348 550.500h31M348 537.500h31M348 547.500h31M356.500 535v15M359.500 535v15M377.500 535v15" />
  <path d="M350 539.500a2 2 0 1 0 .1 0M350 536v12"/>
  <path d="M379 534.500l6-3v22l-6-3M381.500 533v18M383.500 532v20" />
  <path d="M385 529h58v24.500h-58z" fill="url(#pl)" stroke="none"/>
  <path d="M385 531.500h10M395 529h48M385 553.500h15M400 559h43" stroke-width="1.500"/>
  <path d="M400 554h43v5h-43z" fill="url(#pd)" stroke="none"/>
  <path d="M388.500 532v21M392.500 532v21M397.500 530v24M406.500 530v24M409.500 533v18M418.500 531v22M425 534h12v4h-12zM431 546h10v6h-10zM420 540.500h16" />
  <path d="M386 535h6v14h-6z" fill="#fff" stroke="none"/>
  <path d="M412 536q-3 6 0 13M415 536q-3 6 0 13" stroke-width="1.500"/>
  <path d="M422 538q-3 4 0 8h8" stroke-width="2"/>
  <path d="M442 534.500h7v17.500h-7zM444.500 535v17M446.500 535v17" />
  <path d="M438 531h5v4h-5z" fill="#fff" stroke="none"/>
</g>
<!-- ===== VIEW 6 : hatched flange section (lower middle) ===== -->
<g id="v6">
  <circle cx="532" cy="494.500" r="29.300" stroke="url(#hatch)" stroke-width="11.600"/>
  <circle cx="532" cy="494.500" r="35"/>
  <circle cx="532" cy="494.500" r="23.500"/>
  <!-- bolt holes -->
  <g fill="#000">
  <path d="M515.500 465.500h3v3h-3zM508 472h3v3h-3zM503.500 478.500h3v3h-3zM545.500 465.500h3v3h-3zM553 471h3v3h-3zM558 477h3v3h-3zM561 493.500h3v3h-3zM503.500 508h3v3h-3zM508 515h3v3h-3zM515 520h3v3h-3zM546 520h3v3h-3zM553 515h3v3h-3zM557.500 508h3v3h-3z"/>
  <path d="M498 488h6v4h2v6h-2v4h-6z"/>
  </g>
  <path d="M530.500 460v8M533.500 460v8M530.500 468l1.500 2 1.500-2"/>
  <!-- cross lines -->
  <path d="M512.500 479.500l39.500 30M552 479l-39.500 30M532 494.500v49"/>
  <!-- lower arc -->
  <path d="M503 517.500l-9.500 7M561 517.500l9 7"/>
  <path d="M493.500 524.500q38.500 38 76.500 0" shape-rendering="crispEdges"/>
  <circle cx="508.500" cy="531.500" r=".8" fill="#fff"/><circle cx="547" cy="536" r=".8" fill="#fff"/>
  <!-- leader -->
  <path d="M477 499.500l28.500-36.500M503 467.500l2.500-4.500-4 3"/>
</g>
</svg>
</div>

<!-- page tab -->
<div id="pagerow"></div>
<svg class="abs" style="left:43px;top:650px;width:152px;height:26px" viewBox="0 0 152 26"><path d="M0.5 0.5v19.5q0 4 4 4h126.5L148.5 0.5" fill="#f5faff" stroke="#5f9fdc" stroke-width="1"/></svg>
<svg style="width:36.79px;height:14.40px;position:absolute;left:94.0px;top:655.8px;" viewBox="0 -880 2555 1000"><text class="tx" x="0" y="0" fill="#222" textLength="2555" lengthAdjust="spacingAndGlyphs">页面1</text></svg>

<!-- status bar -->
<div id="statline"></div>
<div id="status"></div>
<div class="sb" style="left:1px;width:168px"></div>
<div class="sb" style="left:170px;width:169px"></div>
<div class="sb" style="left:339px;width:166px"></div>
<!-- app icon 1 : CAD editor standard -->
<svg class="abs" style="left:5px;top:687px;width:22px;height:22px" viewBox="0 0 22 22"><rect x=".8" y=".7" width="20.400" height="20.700" rx="2.200" fill="#2276f4"/><path d="M5 1v20M1 5.200h20M1 18.700h20" stroke="#7fb0ff" stroke-width=".9" fill="none"/><circle cx="5" cy="5.200" r="1.500" fill="#2276f4" stroke="#a9c9ff" stroke-width=".8"/><text x="11" y="16.700" font-family="Liberation Sans, sans-serif" font-weight="bold" font-size="9" fill="#fff" text-anchor="middle" textLength="17.500" lengthAdjust="spacingAndGlyphs">CAD</text></svg>
<svg style="width:97.19px;height:12.25px;position:absolute;left:30.0px;top:691.2px;" viewBox="0 -880 7934 1000"><text class="tx" x="0" y="0" fill="#0e3f7c" textLength="7934" lengthAdjust="spacingAndGlyphs">CAD编辑器标准版</text></svg>
<!-- app icon 2 : CAD editor pro -->
<svg class="abs" style="left:174px;top:687px;width:22px;height:22px" viewBox="0 0 22 22"><rect x=".8" y=".7" width="20.400" height="20.700" rx="2.600" fill="#1f70f5"/><path d="M4.400 1v20M1 4.600h20" stroke="#8ab6ff" stroke-width=".9" fill="none"/><circle cx="4.400" cy="4.600" r="1.400" fill="#1f70f5" stroke="#c0d8ff" stroke-width=".8"/><path d="M7.200 21.400l5-16.600h3.600l5.400 16.600h-3.400l-1.100-3.800h-5.200l-1.100 3.800zM12.300 14.800h3.600l-1.800-6.200z" fill="#fff" fill-rule="evenodd"/><path d="M6.300 21l4.800-16" stroke="#fff" stroke-width=".8"/></svg>
<svg style="width:97.19px;height:12.25px;position:absolute;left:200.0px;top:691.2px;" viewBox="0 -880 7934 1000"><text class="tx" x="0" y="0" fill="#0e3f7c" textLength="7934" lengthAdjust="spacingAndGlyphs">CAD编辑器专业版</text></svg>
<!-- app icon 3 : CAD converter -->
<svg class="abs" style="left:341px;top:687px;width:23px;height:23px" viewBox="0 0 23 23"><rect x="1" y="1" width="21" height="21" rx="3" fill="#1679ea"/><path d="M19.600 7.600c0-2.200-1-3-3-3H6" stroke="#fff" stroke-width="1.300" fill="none"/><path d="M3.600 4.600l3.400-2.200v4.400z" fill="#fff"/><path d="M3.400 15.400c0 2.200 1 3 3 3h10.600" stroke="#fff" stroke-width="1.300" fill="none"/><path d="M19.600 18.400l-3.400-2.200v4.400z" fill="#fff"/><text x="11.500" y="14.700" font-family="Liberation Sans, sans-serif" font-weight="bold" font-size="8.600" fill="#fff" text-anchor="middle" textLength="17" lengthAdjust="spacingAndGlyphs">CAD</text></svg>
<svg style="width:60.44px;height:12.25px;position:absolute;left:392.0px;top:691.2px;" viewBox="0 -880 4934 1000"><text class="tx" x="0" y="0" fill="#0e3f7c" textLength="4934" lengthAdjust="spacingAndGlyphs">CAD转换器</text></svg>
<!-- separators + download arrows -->
<div class="sbsep" style="left:139px"></div>
<div class="sbsep" style="left:309px"></div>
<div class="sbsep" style="left:477px"></div>
<svg class="abs" style="left:148px;top:691px;width:12px;height:15px" viewBox="0 0 12 15"><path d="M4 1h4v4.800h3.200L6 11 .8 5.800H4z" fill="#c3d4f0"/><path d="M1 13.400h10" stroke="#c3d4f0" stroke-width="1"/></svg>
<svg class="abs" style="left:317px;top:691px;width:12px;height:15px" viewBox="0 0 12 15"><path d="M4 1h4v4.800h3.200L6 11 .8 5.800H4z" fill="#c3d4f0"/><path d="M1 13.400h10" stroke="#c3d4f0" stroke-width="1"/></svg>
<svg class="abs" style="left:485px;top:691px;width:12px;height:15px" viewBox="0 0 12 15"><path d="M4 1h4v4.800h3.200L6 11 .8 5.800H4z" fill="#c3d4f0"/><path d="M1 13.400h10" stroke="#c3d4f0" stroke-width="1"/></svg>
<!-- version + support button -->
<svg style="width:48.00px;height:12.00px;position:absolute;left:811.0px;top:691.5px;" viewBox="0 -880 4000 1000"><text class="tx" x="0" y="0" fill="#777">版本号：</text></svg>
<div id="ver">1.2.0.0</div>
<div id="kefu"></div>
<svg class="abs" style="left:910px;top:689px;width:16px;height:18px" viewBox="0 0 16 18"><ellipse cx="4.800" cy="15.600" rx="2.600" ry="1.300" fill="#f7a30c"/><ellipse cx="11.400" cy="15.600" rx="2.600" ry="1.300" fill="#f7a30c"/><path d="M2.600 9.200c-1.200 1-1.600 2.400-1.400 3.600l1.800-.8zM13.400 9.200c1.200 1 1.600 2.400 1.400 3.600l-1.800-.8z" fill="#111"/><ellipse cx="8" cy="11.800" rx="5.600" ry="4.400" fill="#111"/><ellipse cx="8" cy="12.200" rx="4.400" ry="3.600" fill="#fff"/><ellipse cx="8" cy="5.400" rx="5" ry="4.600" fill="#111"/><ellipse cx="6.300" cy="4.800" rx=".9" ry="1.400" fill="#fff"/><ellipse cx="9.700" cy="4.800" rx=".9" ry="1.400" fill="#fff"/><ellipse cx="8" cy="7.400" rx="2.800" ry="1" fill="#f9c50a"/><path d="M2.400 8c3.600 1.600 7.600 1.600 11.200 0l.4 2c-3.800 1.800-8.200 1.800-12 0z" fill="#e8191c"/><path d="M4.400 10.200l2 .4-.6 3.200-1.800-.6z" fill="#e8191c"/></svg>
<svg style="width:56.00px;height:14.00px;position:absolute;left:932.0px;top:690.5px;" viewBox="0 -880 4000 1000"><text class="tx" x="0" y="0" fill="#333">在线客服</text></svg>

<!-- window borders -->
<div class="bl" style="left:0;top:40px;width:1px;height:672px"></div>
<div class="bl" style="left:1001px;top:40px;width:1px;height:672px"></div>
<div class="bl" style="left:0;top:711px;width:1002px;height:1px"></div>
</div>

</body></html>
